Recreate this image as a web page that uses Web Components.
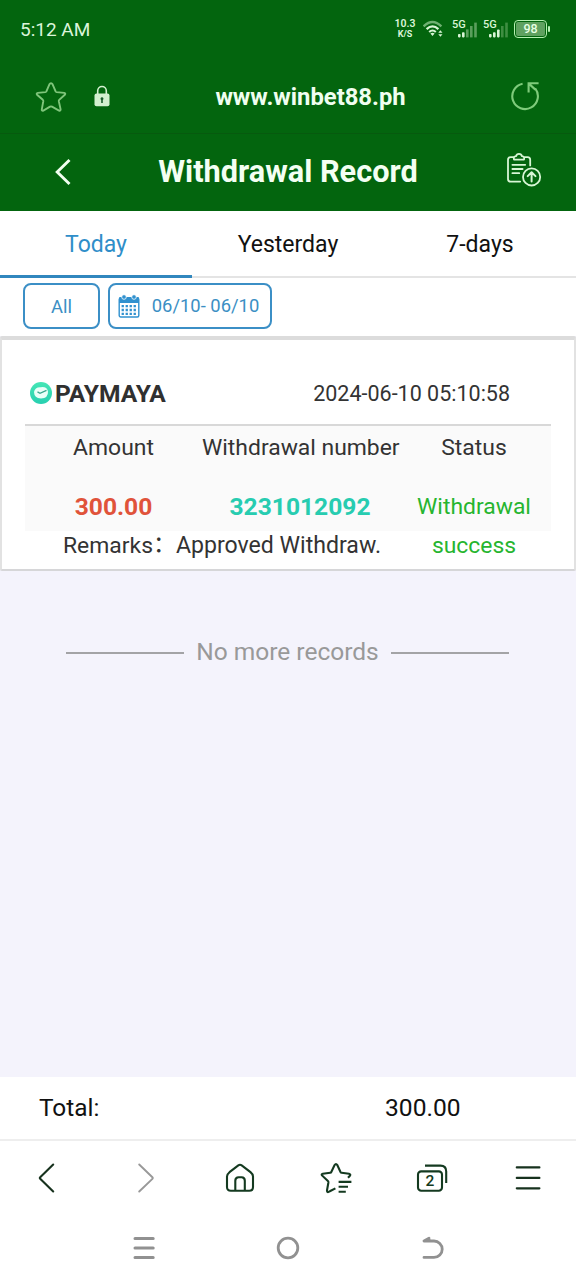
<!DOCTYPE html>
<html lang="en">
<head>
<meta charset="utf-8">
<title>Withdrawal Record</title>
<style>
html,body{margin:0;padding:0}
body{width:576px;height:1280px;overflow:hidden;font-family:Roboto,"Liberation Sans",sans-serif;background:#f4f3fc}
</style>
</head>
<body>
<record-app></record-app>
<script>
const define = (name, html) => {
  const tpl = document.createElement('template');
  tpl.innerHTML = html;
  customElements.define(name, class extends HTMLElement {
    constructor() {
      super();
      this.attachShadow({ mode: 'open' }).append(tpl.content.cloneNode(true));
    }
  });
};

const ICONS = {
  wifi: [20, 18, `<g fill="none" stroke="#d9f5d6" stroke-linecap="butt"><path d="M.6 6.4Q9.5-2.2 18.4 6.4" stroke="#6fb072" stroke-width="2.4"/><path d="M3.6 9.2Q9.5 3.6 15.4 9.2" stroke-width="2.3"/><path d="M6.2 12Q9.5 9 12.8 12" stroke-width="2.1"/></g><path d="M7.4 13.6Q9.5 12 11.6 13.6L9.5 16ZM15.3 12.8l2.1-2.6 2.1 2.6zM15.3 14.2l2.1 2.6 2.1-2.6z" fill="#d9f5d6"/>`],
  signal: [26, 18, `<g fill="#d9f5d6"><rect x="6" y="14" width="2.6" height="3.4" rx=".8"/><rect x="10" y="12.2" width="2.6" height="5.2" rx=".8"/></g><g fill="#5a9f5c"><rect x="14" y="9.4" width="2.6" height="8"/><rect x="18" y="6" width="2.6" height="11.4"/><rect x="22.2" y="2.6" width="2.6" height="14.8"/></g>`],
  signal3: [26, 18, `<g fill="#d9f5d6"><rect x="6" y="14" width="2.6" height="3.4" rx=".8"/><rect x="10" y="12.2" width="2.6" height="5.2" rx=".8"/><rect x="14" y="9.4" width="2.6" height="8" rx=".8"/></g><g fill="#3f8e42"><rect x="18" y="6" width="2.6" height="11.4"/><rect x="22.2" y="2.6" width="2.6" height="14.8"/></g>`],
  star: [32, 32, `<path d="M16 2.2Q17 2.2 17.5 3.2L20.6 10.4Q20.9 11 21.6 11.1L29.2 11.9Q31 12.4 29.8 13.8L24.2 18.9Q23.7 19.4 23.8 20.2L25.6 28.3Q25.6 30.2 24 29.6L17 25.7Q16 25.2 15 25.7L8.4 29.6Q6.5 30.2 6.8 28.3L8.3 20.2Q8.4 19.4 7.8 18.8L2.1 13.8Q1 12.2 2.8 11.9L10.4 11.1Q11.1 11 11.4 10.4L14.5 3.2Q15 2.2 16 2.2Z" fill="none" stroke="#7fc57b" stroke-width="1.9"/>`],
  lock: [16, 22, `<path d="M3.7 9V5.8a4.3 4.3 0 0 1 8.6 0V9" fill="none" stroke="#d3f0cf" stroke-width="1.6"/><rect x=".5" y="8.4" width="15" height="12.8" rx="2" fill="#d3f0cf"/><path d="M8 12.2a1.6 1.6 0 0 1 .8 2.9V18H7.2v-2.9A1.6 1.6 0 0 1 8 12.2Z" fill="#195c2b"/>`],
  reload: [30, 30, `<path d="M12.6 2.7A12.8 12.8 0 1 0 25.2 7.4M28.6 2.3H18.6V11.6M18.8 2.6L25.4 8.6" fill="none" stroke="#7fcb7b" stroke-width="2.1"/>`],
  back: [18, 28, `<path d="M15.5 2L3.2 14L15.5 26" fill="none" stroke="#f1fff0" stroke-width="2.9"/>`],
  clip: [36, 36, `<g fill="none" stroke="#d8f6d5" stroke-width="1.8" stroke-linecap="round" stroke-linejoin="round"><path d="M7.6 5.2H4.6Q2 5.2 2 7.8V27Q2 29.6 4.6 29.6H14.2M18.5 5.2H21.6Q24.2 5.2 24.2 7.8V13.4M8 7.6Q7.2 4.4 10 4.2Q10.6 1.8 13 1.8T16 4.2Q18.8 4.4 18 7.6Z"/><path d="M6.4 12.8H19.2M6.4 17H16.6M6.4 21.2H13.2"/><circle cx="25.6" cy="24.9" r="8.6"/><path d="M25.6 29.5V20.8M21.7 24.1L25.6 20.2L29.5 24.1" stroke-width="2"/></g>`],
  calendar: [22, 24, `<rect x="1.2" y="4" width="19.6" height="19" rx="1.5" fill="#fff" stroke="#3191cf" stroke-width="1.4"/><path d="M1 4Q1 3 2.5 3H19.5Q21 3 21 4V9H1Z" fill="#3191cf"/><g fill="#3191cf" stroke="#fff" stroke-width=".8"><circle cx="6" cy="3" r="2.3"/><circle cx="16" cy="3" r="2.3"/></g><path d="M3.6 12.2H19M3.6 16H19M3.6 19.8H19" stroke="#3191cf" stroke-width="2.3" stroke-dasharray="2.3 1.7"/>`],
  paymaya: [22, 22, `<defs><linearGradient id="g" x2="0" y2="1"><stop stop-color="#45e6b5"/><stop offset="1" stop-color="#27cfb0"/></linearGradient></defs><circle cx="11" cy="11" r="11" fill="url(#g)"/><path d="M4 10Q5 4.7 11 5.2Q17 4.5 18 9.5Q18.4 16.2 11 16.4Q4.2 16.3 4 10Z" fill="#e9fff8"/><path d="M7.5 9.9L10 11.3L16.5 8.4" fill="none" stroke="#38a68e" stroke-width="1.3"/>`],
  left: [20, 32, `<path d="M16.2 2.5L3.2 15.2Q2.4 16 3.2 16.8L16.2 29.5" fill="none" stroke="#17321e" stroke-width="2.1" stroke-linecap="round"/>`],
  right: [20, 32, `<path d="M3.2 2.5L16.4 15.2Q17.2 16 16.4 16.8L3.2 29.5" fill="none" stroke="#999" stroke-width="1.9" stroke-linecap="round"/>`],
  home: [30, 30, `<path d="M4.5 9.2L13.3 2.4Q15 1.2 16.7 2.4L25.5 9.2Q28 11.2 28 13.5V24Q28 27.8 24.2 27.8H5.8Q2 27.8 2 24V13.5Q2 11.2 4.5 9.2ZM10.3 27.6V17.8Q10.3 14.2 13.6 14.2H16.6Q19.8 14.2 19.8 17.8V27.6" fill="none" stroke="#143a20" stroke-width="2.1"/>`],
  favs: [32, 32, `<path d="M10 29.2L8.7 29.9Q7 30.6 7 28.4L8.4 20.5Q8.5 19.7 7.9 19.1L2 13.4Q1 12.2 2.8 11.8L10.2 10.8Q11 10.7 11.3 10L14.6 3.1Q16 1 17.3 3.1L20.5 10Q20.9 10.7 21.6 10.8L29 11.7Q31.2 12.4 29.7 14L28 15.8M9.8 29.3L15.4 26.4M18.6 19.9H31.4M18.6 24.8H28M18.6 29.8H25.8" fill="none" stroke="#143a20" stroke-width="2.1"/>`],
  tabs: [32, 30, `<path d="M9 2.6H24.5Q30.2 2.6 30.2 8.4V20" fill="none" stroke="#143a20" stroke-width="2.1"/><rect x="2" y="8.4" width="24" height="19.4" rx="3.2" fill="none" stroke="#143a20" stroke-width="2.1"/>`],
  menu: [26, 26, `<path d="M1.8 2.4H24.4M1.8 12.9H24.4M1.8 23.3H24.4" stroke="#17321e" stroke-width="2.2" stroke-linecap="round"/>`],
  recent: [22, 24, `<path d="M2 2.6H20.2M2 12H20.2M2 21.6H20.2" stroke="#919191" stroke-width="3" stroke-linecap="round"/>`],
  circle: [24, 24, `<circle cx="12" cy="12" r="9.8" fill="none" stroke="#919191" stroke-width="2.8"/>`],
  undo: [24, 24, `<path d="M9 2.2L4 5H14A8.2 8.2 0 0 1 14 21.4H4M4 5L9 2.2V5" fill="none" stroke="#919191" stroke-width="2.8" stroke-linecap="round" stroke-linejoin="round"/>`]
};
customElements.define('ui-icon', class extends HTMLElement {
  connectedCallback() {
    if (this.shadowRoot) return;
    const [w, h, body] = ICONS[this.getAttribute('name')];
    this.attachShadow({ mode: 'open' }).innerHTML =
      `<style>:host{display:block;flex:none;width:${w}px;height:${h}px}svg{display:block}</style><svg width="${w}" height="${h}" viewBox="0 0 ${w} ${h}">${body}</svg>`;
  }
});

define('signal-meter', `<style>
:host{display:block;position:relative;width:26px;height:18px}
span{position:absolute;left:0;top:-1px;font-size:11px;line-height:12px;font-weight:500;color:#d9f5d6}
</style><slot></slot><span>5G</span>`);

define('status-bar', `<style>
:host{display:flex;height:60px;box-sizing:border-box;padding:0 28px 2px 20px;align-items:center;color:#dcf5da}
.time{font-size:19px;line-height:24px;margin-right:auto;padding-top:2px}
.speed{width:22px;text-align:center;margin-right:7px;white-space:nowrap}
.speed b{display:block;font-size:10.5px;font-weight:600;line-height:10.5px}
.speed i{display:block;font-style:normal;font-size:9px;line-height:10px;font-weight:700}
ui-icon.w{margin-right:9px}
signal-meter{margin-right:5px}
.bat{box-sizing:border-box;width:33px;height:18px;border:1.6px solid #b6f0b2;border-radius:4px;padding:1px}
.bat span{display:block;background:#5fa160;border-radius:2px;text-align:center;font-size:12.5px;line-height:14px;height:14px;font-weight:500;color:#e6ffe3}
.tip{width:2px;height:6px;background:#b6f0b2;border-radius:1px;margin-left:1px;margin-right:-2px}
</style>
<span class="time">5:12 AM</span>
<div class="speed"><b>10.3</b><i>K/S</i></div>
<ui-icon class="w" name="wifi"></ui-icon>
<signal-meter><ui-icon name="signal"></ui-icon></signal-meter>
<signal-meter><ui-icon name="signal3"></ui-icon></signal-meter>
<div class="bat"><span>98</span></div><div class="tip"></div>`);

define('url-bar', `<style>
:host{display:grid;grid-template-columns:92px 60px 1fr 107px;height:74px;box-sizing:border-box;align-items:center;border-bottom:1px solid #065a0e;color:#f0fff0}
.s{margin-left:35px}.l{margin-left:2px;margin-top:-1px}.r{margin-left:41px;margin-top:-2px}
span{text-align:center;font-weight:700;font-size:23.8px;line-height:28px;white-space:nowrap}
</style><ui-icon class="s" name="star"></ui-icon><ui-icon class="l" name="lock"></ui-icon><span>www.winbet88.ph</span><ui-icon class="r" name="reload"></ui-icon>`);

define('title-bar', `<style>
:host{display:grid;grid-template-columns:100px 1fr 100px;height:77px;align-items:center;color:#f4fff3}
.b{margin-left:54px;margin-top:-1px}.c{margin-left:30px;margin-top:-5px}
h1{margin:-1px 0 0;text-align:center;font-weight:700;font-size:30.7px;line-height:36px;white-space:nowrap}
</style><ui-icon class="b" name="back"></ui-icon><h1><slot></slot></h1><ui-icon class="c" name="clip"></ui-icon>`);

define('tab-item', `<style>
:host{display:flex;box-sizing:border-box;height:67px;align-items:center;justify-content:center;border-bottom:2px solid #e4e4e4;font-size:23px;color:#111;padding-top:1px}
:host([active]){color:#2f8ec9;border-bottom:3px solid #3187be;padding-top:2px}
</style><slot></slot>`);
define('tab-strip', `<style>:host{display:grid;grid-template-columns:repeat(3,1fr);background:#fff}</style><slot></slot>`);

define('filter-chip', `<style>
:host{display:flex;box-sizing:border-box;height:46px;border:2px solid #3b8fc6;border-radius:8px;align-items:center;justify-content:center;color:#3b8fc4;font-size:18.4px;white-space:nowrap;background:#fff}
</style><slot></slot>`);
define('filter-row', `<style>
:host{display:flex;gap:8px;height:58px;box-sizing:border-box;padding:5px 0 0 23px;background:#fff}
.all{width:77px}.date{width:164px}
.date ui-icon{margin-right:12px;margin-left:-1px}
.date span{margin-top:-2px;margin-right:2px}
.all span{margin-top:1px}
</style><filter-chip class="all"><span>All</span></filter-chip><filter-chip class="date"><ui-icon name="calendar"></ui-icon><span>06/10- 06/10</span></filter-chip>`);

define('record-card', `<style>
:host{display:block;box-sizing:border-box;height:235px;border:2px solid #e2e2e2;border-top:4px solid #dcdcdc;border-bottom-color:#d6d6d8;background:#fff;padding:0 23px;border-radius:2px;color:#333}
.head{display:flex;align-items:center;height:86px;border-bottom:2px solid #d8d8d8;padding:22px 41px 0 5px;box-sizing:border-box}
.head b{font-size:24.6px;font-weight:700;margin:0 auto 0 3px;color:#303030}
.head time{font-size:21.5px}
.body{display:grid;grid-template-columns:178px 195px 1fr;grid-template-rows:43px 62px;height:105px;background:#fafafa;text-align:center;white-space:nowrap}
.body span{font-size:22.9px;line-height:28px;padding-top:8px;margin-left:-1px}
.body .v{font-size:24.6px;font-weight:700;padding-top:24px}
.amt{color:#e0533a}.num{color:#27ccb0}
.body .st,.st2{color:#26b52f}
.body .st{font-size:22.9px;font-weight:400}
.foot{display:grid;grid-template-columns:1fr 154px;height:34px;font-size:22.9px;line-height:28px;padding-top:1px;white-space:nowrap}
.foot p{margin:0 0 0 38px;display:flex}
.foot i{font-style:normal;font-family:"Noto Sans CJK SC",sans-serif;font-size:23px;margin-top:-4px}
.foot em{font-style:normal;font-size:23.1px}
.st2{text-align:center}
</style>
<div class="head"><ui-icon name="paymaya"></ui-icon><b>PAYMAYA</b><time>2024-06-10 05:10:58</time></div>
<div class="body"><span>Amount</span><span>Withdrawal number</span><span>Status</span>
<span class="v amt">300.00</span><span class="v num">3231012092</span><span class="v st">Withdrawal</span></div>
<div class="foot"><p><span>Remarks</span><i>：</i><em>Approved Withdraw.</em></p><span class="st2">success</span></div>`);

define('end-note', `<style>
:host{display:flex;align-items:center;justify-content:center;gap:12px;padding:66px 0 0;margin-left:-1px;font-size:24.5px;line-height:30px;color:#999;white-space:nowrap}
i{width:118px;height:2px;background:#a3a3a6;margin-top:2px}
</style><i></i><slot></slot><i></i>`);

define('total-bar', `<style>
:host{display:grid;grid-template-columns:385px 1fr;box-sizing:border-box;height:64px;padding-bottom:2px;align-items:center;background:#fff;border-bottom:2px solid #eee;font-size:24.6px;color:#111}
.l{padding-left:39px;font-size:24.4px}
</style><span class="l">Total:</span><span>300.00</span>`);

define('tool-bar', `<style>
:host{display:grid;grid-template-columns:repeat(6,96px);height:75px;box-sizing:border-box;padding-bottom:1px;place-items:center;background:#fff}
.a{margin-left:-3px}.b{margin-left:3px}
div{position:relative}
div span{position:absolute;left:2px;top:8px;width:24px;text-align:center;font-size:15.5px;line-height:20px;font-weight:500;color:#143a20}
</style><ui-icon class="a" name="left"></ui-icon><ui-icon class="b" name="right"></ui-icon><ui-icon name="home"></ui-icon><ui-icon name="favs"></ui-icon><div><ui-icon name="tabs"></ui-icon><span>2</span></div><ui-icon name="menu"></ui-icon>`);

define('nav-bar', `<style>
:host{display:grid;grid-template-columns:repeat(3,144px);padding:0 72px;height:64px;place-items:center;background:#fff}
</style><ui-icon name="recent"></ui-icon><ui-icon name="circle"></ui-icon><ui-icon name="undo"></ui-icon>`);

define('record-app', `<style>
:host{display:flex;flex-direction:column;height:1280px;background:#f4f3fc}
header{background:#03650e}
main{flex:1}
</style>
<header><status-bar></status-bar><url-bar></url-bar><title-bar>Withdrawal Record</title-bar></header>
<main>
<tab-strip><tab-item active>Today</tab-item><tab-item>Yesterday</tab-item><tab-item>7-days</tab-item></tab-strip>
<filter-row></filter-row>
<record-card></record-card>
<end-note>No more records</end-note>
</main>
<total-bar></total-bar><tool-bar></tool-bar><nav-bar></nav-bar>`);
</script>
</body>
</html>
